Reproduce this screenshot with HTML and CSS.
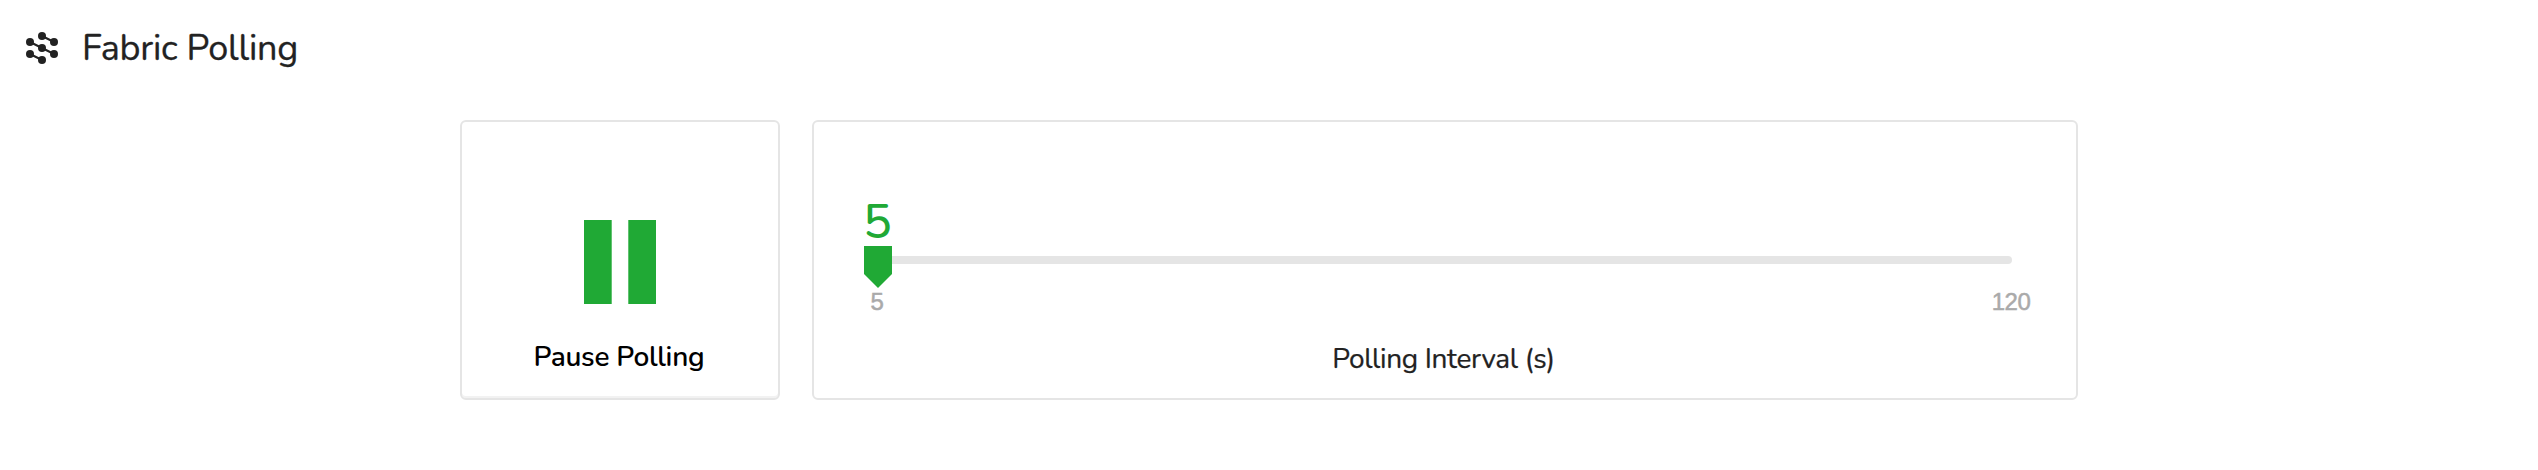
FILE: index.html
```html
<!DOCTYPE html>
<html lang="en">
<head>
<meta charset="utf-8">
<title>Fabric Polling</title>
<link rel="stylesheet" href="styles.css">
</head>
<body>
<header class="header">
  <svg class="logo" viewBox="0 0 32 32" fill="#222" stroke="#222">
    <path d="M4 10 28 22M16 4 28 10M4 22 16 28" stroke-width="2" fill="none"/>
    <g stroke="none"><circle cx="16" cy="4" r="4"/><circle cx="4" cy="10" r="4"/><circle cx="28" cy="10" r="4"/><circle cx="16" cy="16" r="4"/><circle cx="4" cy="22" r="4"/><circle cx="28" cy="22" r="4"/><circle cx="16" cy="28" r="4"/></g>
  </svg>
  <h1 class="title">Fabric Polling</h1>
</header>
<main class="cards">
  <button class="card pause">
    <svg class="pause-icon" viewBox="0 0 72 84" fill="#20a935"><path d="M0 0h27.7v84H0zM44.3 0H72v84H44.3z"/></svg>
    <span class="pause-label">Pause Polling</span>
  </button>
  <section class="card interval">
    <div class="value">5</div>
    <div class="slider">
      <div class="track"></div>
      <svg class="thumb" viewBox="0 0 28 42" fill="#20a935"><path d="M0 0h28v28L14 42 0 28z"/></svg>
    </div>
    <div class="range"><span class="tick">5</span><span class="tick">120</span></div>
    <div class="interval-label">Polling Interval (s)</div>
  </section>
</main>
</body>
</html>
```
FILE: styles.css
```css
* { box-sizing: border-box; }
body { margin: 0; background: #fff; color: #222; font-family: Nunito, "Noto Sans", sans-serif; }
.header { display: flex; align-items: center; height: 96px; padding-left: 26px; }
.logo { width: 32px; height: 32px; }
.title { margin: 2px 0 0 24px; font-size: 36px; font-weight: 400; line-height: 48px; letter-spacing: -0.24px; white-space: nowrap; -webkit-text-stroke: 0.3px #222; }
.cards { display: flex; justify-content: center; gap: 32px; margin-top: 24px; }
.card { height: 280px; border: 2px solid #e5e5e5; border-radius: 6px; background: #fff; }
.pause { display: flex; flex-direction: column; align-items: center; width: 320px; padding: 98px 0 0; color: #000; font-family: inherit; box-shadow: inset 0 -2px 0 #f2f2f2; }
.pause-icon { width: 72px; height: 84px; }
.pause-label { margin: 33px 2px 0 0; font-size: 28px; font-weight: 600; line-height: 40px; letter-spacing: -0.25px; white-space: nowrap; }
.interval { width: 1266px; padding: 68px 64px 0; }
.value { width: 28px; height: 56px; margin-left: -15px; color: #20a935; font-size: 48px; font-weight: 500; line-height: 64px; text-align: center; }
.slider { position: relative; height: 42px; padding-top: 10px; }
.track { height: 8px; border-radius: 4px; background: #e5e5e5; }
.thumb { position: absolute; left: -14px; top: 0; width: 28px; height: 42px; }
.range { display: flex; justify-content: space-between; height: 28px; margin-left: -1px; margin-right: 1px; color: #aaa; font-family: "Liberation Sans", sans-serif; font-size: 24px; line-height: 28px; letter-spacing: -0.5px; -webkit-text-stroke: 0.5px #aaa; }
.tick { display: flex; justify-content: center; width: 0; }
.interval-label { margin: 23px 3px 0 0; font-size: 28px; line-height: 40px; letter-spacing: -0.34px; text-align: center; white-space: nowrap; -webkit-text-stroke: 0.25px #222; }
```
